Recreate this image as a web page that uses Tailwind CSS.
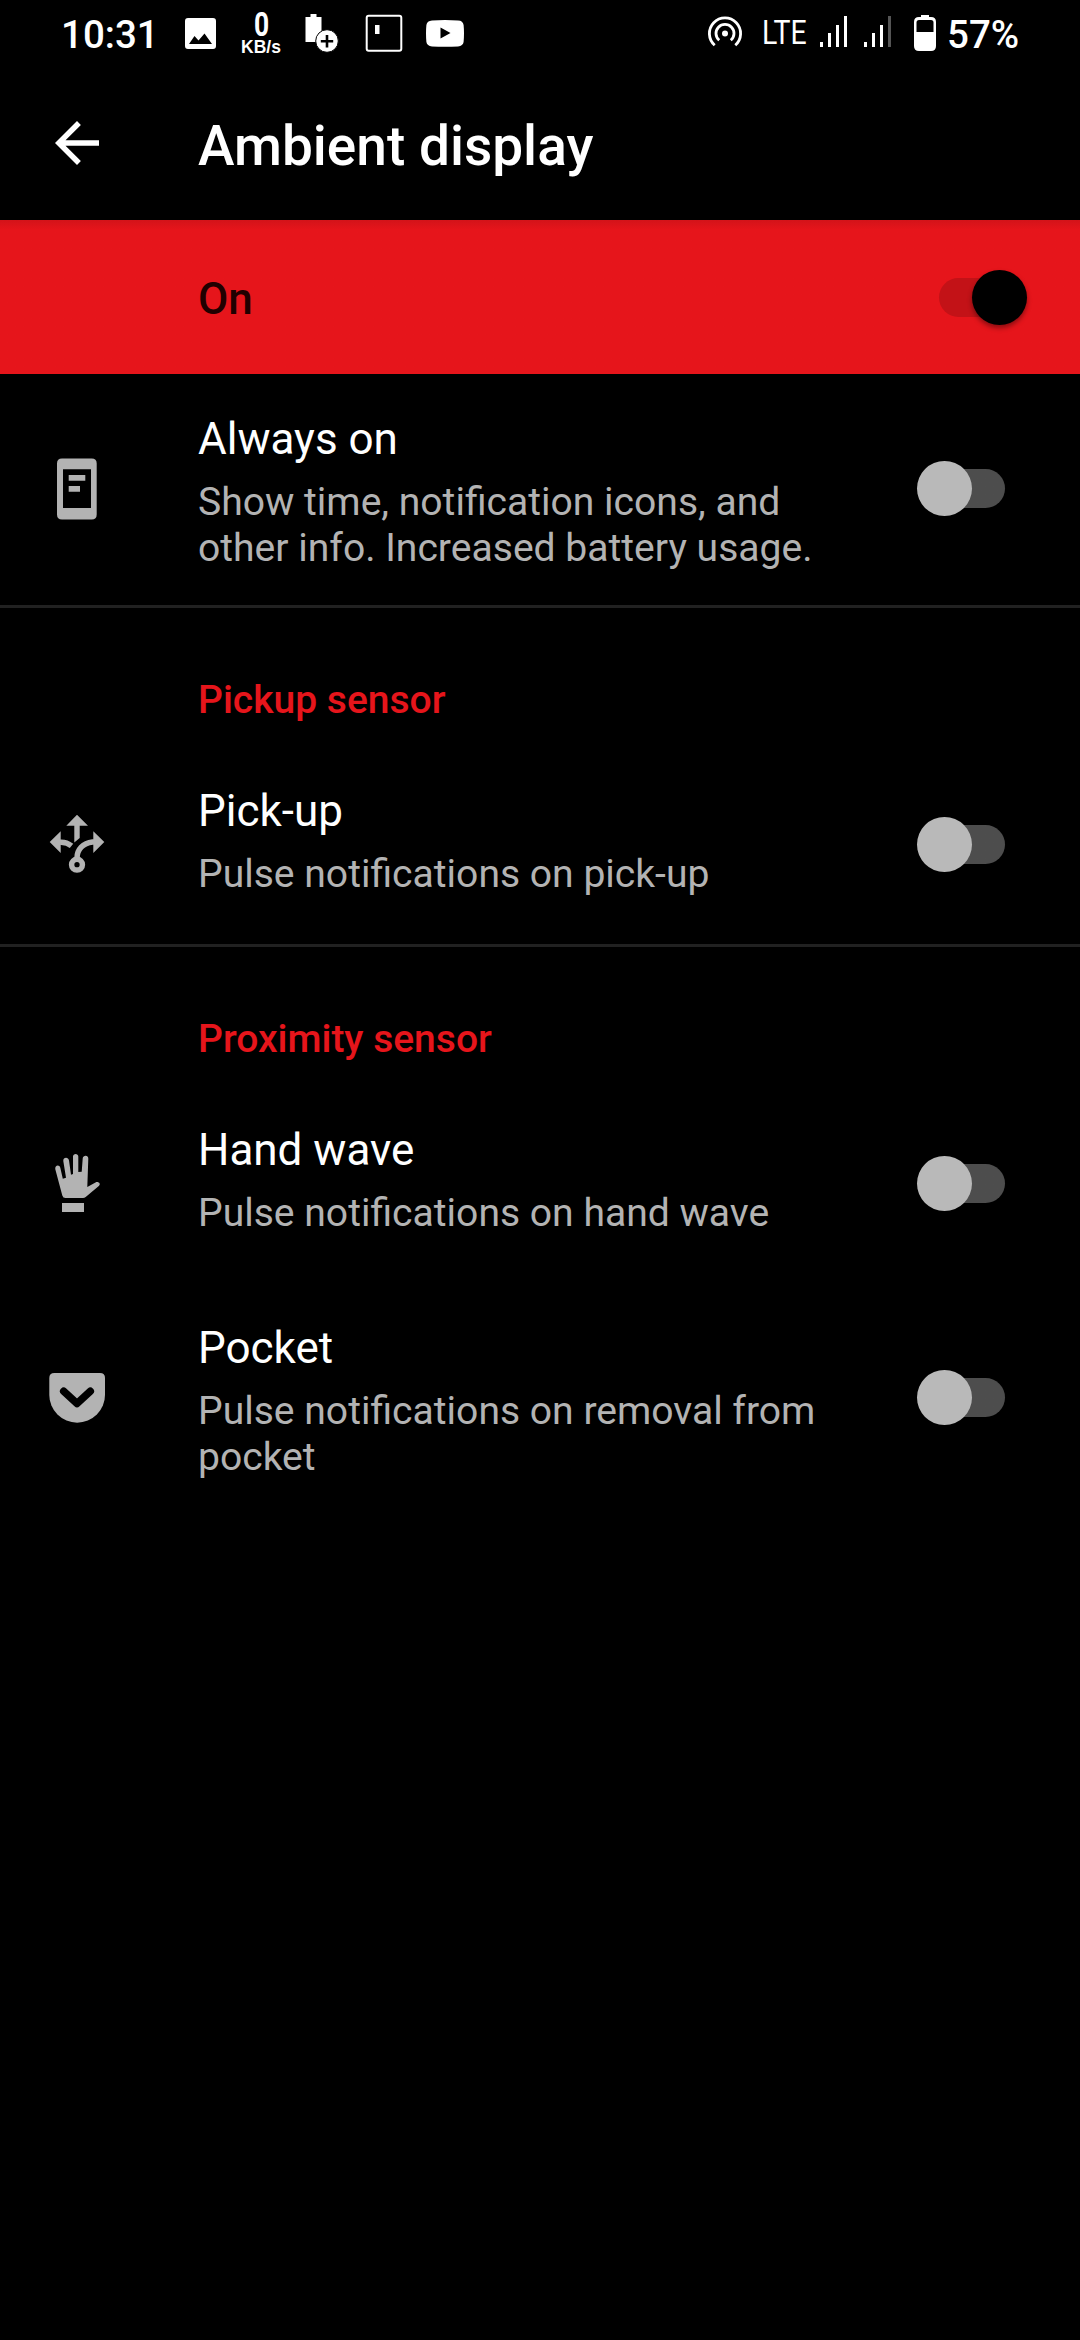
<!DOCTYPE html>
<html lang="en"><head><meta charset="utf-8"><title>Ambient display</title>
<script src="https://cdn.jsdelivr.net/npm/@tailwindcss/browser@4"></script></head>
<body class="bg-black">
<div class="w-[1080px] h-[2340px] bg-black text-white font-[Roboto,sans-serif] overflow-hidden flex flex-col">

  <!-- Status bar -->
  <div class="h-[70px] shrink-0 flex justify-between">
    <div class="flex items-start">
      <span class="pl-[61px] pt-[12px] w-[185px] shrink-0 text-[38.5px] leading-[45px] font-medium whitespace-nowrap">10:31</span>
      <svg class="w-[31px] h-[31px] mt-[18px] shrink-0" viewBox="0 0 31 31"><path fill="#fff" fill-rule="evenodd" d="M3 0H28Q31 0 31 3V28Q31 31 28 31H3Q0 31 0 28V3Q0 0 3 0ZM4 26H27L19.500 15.500L13.500 22.500L9.500 18Z"/></svg>
      <div class="ml-[24px] w-[42px] shrink-0 flex flex-col items-center pt-[12px]">
        <span class="text-[33px] leading-[26px] font-bold scale-x-[0.8]">0</span>
        <span class="text-[17.5px] leading-[18px] font-['Liberation_Sans',sans-serif] font-bold">KB/s</span>
      </div>
      <svg class="w-[35px] h-[40px] ml-[23px] mt-[14px] shrink-0" viewBox="0 0 35 40"><path fill="#fff" d="M.5 3H5.500V0H11.500V3H16.500V28H.5Z"/><circle cx="22" cy="27" r="11.300" fill="#fff" stroke="#000"/><path stroke="#000" stroke-width="2.600" d="M22 21V33.500M15.800 27.200H28.200"/></svg>
      <svg class="w-[38px] h-[38px] ml-[25px] mt-[14px] shrink-0" viewBox="0 0 38 38"><rect x="1.700" y="1.700" width="34.600" height="35" rx="2" fill="none" stroke="#fff" stroke-width="2"/><path fill="#fff" d="M10 11H14.500V20H10Z"/></svg>
      <svg class="w-[38px] h-[27px] ml-[23px] mt-[20px] shrink-0" viewBox="0 0 38 27"><path fill="#fff" fill-rule="evenodd" d="M6 .4Q19 -.4 32 .4Q37 .6 37.600 5Q38.400 13 37.600 22Q37 26 32 26.400Q19 27 6 26.400Q1 26 .4 22Q-.4 13 .4 5Q1 .8 6 .4ZM14.500 7.500V18.500L24.500 13Z"/></svg>
    </div>
    <div class="flex items-start">
      <svg class="w-[36px] h-[32px] mt-[16px] shrink-0" viewBox="0 0 36 32"><g fill="none" stroke="#fff" stroke-width="2.800"><path d="M7.700 29.200A15.600 15.600 0 1 1 28.300 29.200"/><path d="M12.200 24.300A9 9 0 1 1 23.800 24.300"/></g><circle cx="18" cy="17.500" r="3" fill="#fff"/></svg>
      <span class="ml-[19px] mt-[13px] w-[58px] shrink-0 text-[33.5px] leading-[40px] whitespace-nowrap origin-left scale-x-[0.85]">LTE</span>
      <svg class="w-[72px] h-[32px] mt-[16px] shrink-0" viewBox="0 0 72 32" fill="#fff"><path d="M0 26H3V31H0ZM8 17H11V31H8ZM16 9H19V31H16ZM24 0H27V31H24ZM44 26H47V31H44ZM52 17H55V31H52ZM60 9H63V31H60Z"/><path fill="#555" d="M68 0H71V31H68Z"/></svg>
      <svg class="w-[22px] h-[36px] ml-[22px] mt-[15px] shrink-0" viewBox="0 0 22 36"><path fill="#fff" fill-rule="evenodd" d="M7 0H15V2H17Q22 2 22 7V31Q22 36 17 36H5Q0 36 0 31V7Q0 2 5 2H7ZM2.500 17H19.500V7.500Q19.500 5 17 5H5Q2.500 5 2.500 7.500Z"/></svg>
      <span class="ml-[11px] mt-[12px] w-[133px] shrink-0 text-[38.5px] leading-[45px] font-medium">57%</span>
    </div>
  </div>

  <!-- Toolbar -->
  <div class="h-[150px] shrink-0 flex">
    <svg class="ml-[55px] mt-[51px] size-[44px] shrink-0" viewBox="0 0 16 16"><path fill="#fff" d="M16 7H3.830l5.590-5.590L8 0 0 8l8 8 1.410-1.410L3.830 9H16z"/></svg>
    <h1 class="ml-[99px] mt-[44px] text-[55px] leading-[64px] font-medium whitespace-nowrap">Ambient display</h1>
  </div>

  <!-- Main switch -->
  <div class="h-[154px] shrink-0 bg-linear-to-b from-[#d31319] to-[#e6151b] to-[10px] flex items-center pl-[198px] pr-[53px] justify-between">
    <span class="text-[44px] leading-[52px] font-medium text-[#210000] pt-[4px]">On</span>
    <div class="w-[88px] h-[39px] rounded-full bg-[#c31217] flex items-center justify-end">
      <div class="size-[55px] shrink-0 rounded-full bg-black shadow-[0_3px_5px_rgba(0,0,0,0.4)]"></div>
    </div>
  </div>

  <!-- Always on -->
  <div class="h-[231px] shrink-0 flex">
    <div class="w-[198px] pl-[44px] pb-px flex items-center">
      <svg class="size-[66px]" viewBox="0 0 66 66" fill="#b3b3b3"><path fill-rule="evenodd" d="M18 2.500H47.700Q52.700 2.500 52.700 7.500V58.500Q52.700 63.500 47.700 63.500H18Q13 63.500 13 58.500V7.500Q13 2.500 18 2.500ZM19 13.300V52H47V13.300Z"/><path d="M24.700 19H41.300V24.800H24.700ZM24.700 30H36V35.800H24.700Z"/></svg>
    </div>
    <div class="w-[719px] pt-[39px]">
      <div class="text-[44px] leading-[52px]">Always on</div>
      <div class="mt-[14px] text-[39.1px] leading-[46px] text-[#b3b3b3]">Show time, notification icons, and<br>other info. Increased battery usage.</div>
    </div>
    <div class="flex items-center pb-[2px]"><div class="w-[88px] h-[39px] rounded-full bg-linear-to-r from-transparent from-30% to-[#4d4d4d] to-30% flex items-center"><div class="size-[55px] shrink-0 rounded-full bg-[#b9b9b9]"></div></div></div>
  </div>

  <h2 class="h-[141px] shrink-0 border-t-[3px] border-[#212121] pl-[198px] pt-[69px] text-[39px] leading-[46px] font-medium text-[#e6151b]">Pickup sensor</h2>

  <!-- Pick-up -->
  <div class="h-[198px] shrink-0 flex">
    <div class="w-[198px] pl-[44px] flex items-center">
      <svg class="size-[66px]" viewBox="0 0 66 66" fill="#b3b3b3"><path d="M33 2.700L44 13.700H35.700V26L30.300 30.500V13.700H22.300ZM5.700 30L16.700 19.300V41ZM60.300 30L49.300 19.300V41Z"/><g fill="none" stroke="#b3b3b3" stroke-width="5.500"><path d="M16 30.200Q22.500 29.800 27.500 33.800M50 30H48.500C39 31 33 37.500 33 46"/><circle cx="33" cy="52.700" r="5.400"/></g></svg>
    </div>
    <div class="w-[719px] pt-[39px]">
      <div class="text-[44px] leading-[52px]">Pick-up</div>
      <div class="mt-[14px] text-[39.1px] leading-[46px] text-[#b3b3b3]">Pulse notifications on pick-up</div>
    </div>
    <div class="flex items-center pb-px"><div class="w-[88px] h-[39px] rounded-full bg-linear-to-r from-transparent from-30% to-[#4d4d4d] to-30% flex items-center"><div class="size-[55px] shrink-0 rounded-full bg-[#b9b9b9]"></div></div></div>
  </div>

  <h2 class="h-[141px] shrink-0 border-t-[3px] border-[#212121] pl-[198px] pt-[69px] text-[39px] leading-[46px] font-medium text-[#e6151b]">Proximity sensor</h2>

  <!-- Hand wave -->
  <div class="h-[198px] shrink-0 flex">
    <div class="w-[198px] pl-[44px] flex items-center">
      <svg class="size-[66px]" viewBox="0 0 66 66" fill="#b3b3b3"><path d="M11.300 18.300C10.500 14 15.500 13 16.300 16.700L18.800 27.700L22 26.700L19.300 10C18.900 6 24.400 5.500 25 9.500L27 23.700L29 23V5.500C29 2 34.300 2 34.300 5.500V21L37.700 20.700L38.700 7.500C39 3.800 44.600 4 44.300 7.700L43.300 36L51.500 31.400C54.500 30 57.300 33 54.800 35L41.700 46Q40.500 47 39 47H21.500Q19 47 18.300 44.500ZM18 52H40V61H18Z"/></svg>
    </div>
    <div class="w-[719px] pt-[39px]">
      <div class="text-[44px] leading-[52px]">Hand wave</div>
      <div class="mt-[14px] text-[39.1px] leading-[46px] text-[#b3b3b3]">Pulse notifications on hand wave</div>
    </div>
    <div class="flex items-center pb-px"><div class="w-[88px] h-[39px] rounded-full bg-linear-to-r from-transparent from-30% to-[#4d4d4d] to-30% flex items-center"><div class="size-[55px] shrink-0 rounded-full bg-[#b9b9b9]"></div></div></div>
  </div>

  <!-- Pocket -->
  <div class="h-[231px] shrink-0 flex">
    <div class="w-[198px] pl-[44px] pb-px flex items-center">
      <svg class="size-[66px]" viewBox="0 0 66 66"><path fill="#b3b3b3" d="M10.300 8H56Q61 8 61 13V30A27.850 27.700 0 0 1 5.300 30V13Q5.300 8 10.300 8Z"/><path fill="none" stroke="#000" stroke-width="7.500" stroke-linecap="round" stroke-linejoin="round" d="M19.700 26.200L33 38.500L46.300 26.200"/></svg>
    </div>
    <div class="w-[719px] pt-[39px]">
      <div class="text-[44px] leading-[52px]">Pocket</div>
      <div class="mt-[14px] text-[39.1px] leading-[46px] text-[#b3b3b3]">Pulse notifications on removal from<br>pocket</div>
    </div>
    <div class="flex items-center pb-[2px]"><div class="w-[88px] h-[39px] rounded-full bg-linear-to-r from-transparent from-30% to-[#4d4d4d] to-30% flex items-center"><div class="size-[55px] shrink-0 rounded-full bg-[#b9b9b9]"></div></div></div>
  </div>
</div>
</body></html>
